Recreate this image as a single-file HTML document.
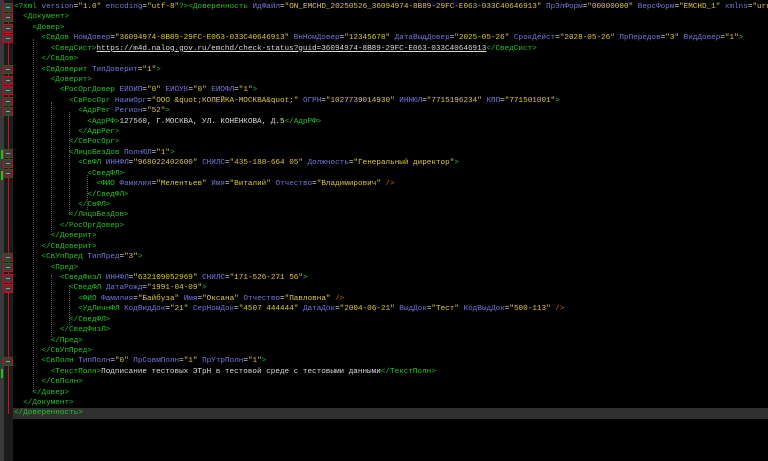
<!DOCTYPE html>
<html><head><meta charset="utf-8"><style>
html,body{margin:0;padding:0;background:#000;width:768px;height:461px;overflow:hidden}
.g1{position:absolute;left:0;top:0;width:4px;height:461px;background:#3a3a3a}
.g2{position:absolute;left:4px;top:0;width:9px;height:461px;background:#1c1c1c}
.rl{position:absolute;left:8px;top:7px;width:1px;height:407px;background:#c01818}
.fm{position:absolute;left:3px;width:10px;height:9px;border:1px solid #b01818;background:#3c3c3c;box-sizing:border-box}
.fm:after{content:"";position:absolute;left:2px;top:3px;width:4px;height:1px;background:#999}
.gb{position:absolute;left:1px;width:2px;background:#20c020}
.hl{position:absolute;left:13px;top:408px;width:755px;height:11px;background:#303030}
.guide{position:absolute;width:0;border-left:1px dotted #555}
pre{position:absolute;left:14px;top:2px;margin:0;font-family:"Liberation Mono",monospace;font-size:7.65px;line-height:10.42px;color:#d8d8d8;white-space:pre}
.t{color:#22c422}.a{color:#7474dc}.v{color:#dcc83c}.o{color:#d0601a}.x{color:#dadada}.u{text-decoration:underline}
</style></head><body>
<div class="g1"></div><div class="g2"></div>
<div class="hl"></div>
<div class="rl"></div>
<div class="fm" style="top:3px"></div>
<div class="fm" style="top:13px"></div>
<div class="fm" style="top:24px"></div>
<div class="fm" style="top:34px"></div>
<div class="fm" style="top:65px"></div>
<div class="fm" style="top:76px"></div>
<div class="fm" style="top:86px"></div>
<div class="fm" style="top:97px"></div>
<div class="fm" style="top:107px"></div>
<div class="fm" style="top:149px"></div>
<div class="fm" style="top:159px"></div>
<div class="fm" style="top:169px"></div>
<div class="fm" style="top:253px"></div>
<div class="fm" style="top:263px"></div>
<div class="fm" style="top:274px"></div>
<div class="fm" style="top:284px"></div>
<div class="fm" style="top:357px"></div>
<div class="gb" style="top:150px;height:9px"></div>
<div class="gb" style="top:171px;height:9px"></div>
<div class="gb" style="top:369px;height:9px"></div>
<div class="guide" style="left:33px;top:39px;height:352px"></div>
<div class="guide" style="left:51px;top:102px;height:130px"></div>
<div class="guide" style="left:51px;top:275px;height:62px"></div>
<div class="guide" style="left:69px;top:112px;height:103px"></div>
<div class="guide" style="left:87px;top:175px;height:35px"></div>
<div class="guide" style="left:69px;top:285px;height:40px"></div>
<pre><span class="t">&lt;?xml</span> <span class="a">version</span>=<span class="v">"1.0"</span> <span class="a">encoding</span>=<span class="v">"utf-8"</span><span class="t">?&gt;&lt;Доверенность</span> <span class="a">ИдФайл</span>=<span class="v">"ON_EMCHD_20250526_36094974-8B89-29FC-E063-033C40646913"</span> <span class="a">ПрЭлФорм</span>=<span class="v">"00000000"</span> <span class="a">ВерсФорм</span>=<span class="v">"EMCHD_1"</span> <span class="a">xmlns</span>=<span class="v">"urn</span>
  <span class="t">&lt;Документ&gt;</span>
    <span class="t">&lt;Довер&gt;</span>
      <span class="t">&lt;СвДов</span> <span class="a">НомДовер</span>=<span class="v">"36094974-8B89-29FC-E063-033C40646913"</span> <span class="a">ВнНомДовер</span>=<span class="v">"12345678"</span> <span class="a">ДатаВыдДовер</span>=<span class="v">"2025-05-26"</span> <span class="a">СрокДейст</span>=<span class="v">"2028-05-26"</span> <span class="a">ПрПередов</span>=<span class="v">"3"</span> <span class="a">ВидДовер</span>=<span class="v">"1"</span><span class="t">&gt;</span>
        <span class="t">&lt;СведСист&gt;</span><span class="x u">https://m4d.nalog.gov.ru/emchd/check-status?guid=36094974-8B89-29FC-E063-033C40646913</span><span class="t">&lt;/СведСист&gt;</span>
      <span class="t">&lt;/СвДов&gt;</span>
      <span class="t">&lt;СвДоверит</span> <span class="a">ТипДоверит</span>=<span class="v">"1"</span><span class="t">&gt;</span>
        <span class="t">&lt;Доверит&gt;</span>
          <span class="t">&lt;РосОргДовер</span> <span class="a">ЕИОИП</span>=<span class="v">"0"</span> <span class="a">ЕИОУК</span>=<span class="v">"0"</span> <span class="a">ЕИОФЛ</span>=<span class="v">"1"</span><span class="t">&gt;</span>
            <span class="t">&lt;СвРосОрг</span> <span class="a">НаимОрг</span>=<span class="v">"ООО &amp;quot;КОПЕЙКА-МОСКВА&amp;quot;"</span> <span class="a">ОГРН</span>=<span class="v">"1027739014930"</span> <span class="a">ИННЮЛ</span>=<span class="v">"7715196234"</span> <span class="a">КПП</span>=<span class="v">"771501001"</span><span class="t">&gt;</span>
              <span class="t">&lt;АдрРег</span> <span class="a">Регион</span>=<span class="v">"52"</span><span class="t">&gt;</span>
                <span class="t">&lt;АдрРФ&gt;</span><span class="x">127560, Г.МОСКВА, УЛ. КОНЁНКОВА, Д.5</span><span class="t">&lt;/АдрРФ&gt;</span>
              <span class="t">&lt;/АдрРег&gt;</span>
            <span class="t">&lt;/СвРосОрг&gt;</span>
            <span class="t">&lt;ЛицоБезДов</span> <span class="a">ПолнЮЛ</span>=<span class="v">"1"</span><span class="t">&gt;</span>
              <span class="t">&lt;СвФЛ</span> <span class="a">ИННФЛ</span>=<span class="v">"968022402600"</span> <span class="a">СНИЛС</span>=<span class="v">"435-188-664 05"</span> <span class="a">Должность</span>=<span class="v">"Генеральный директор"</span><span class="t">&gt;</span>
                <span class="t">&lt;СведФЛ&gt;</span>
                  <span class="t">&lt;ФИО</span> <span class="a">Фамилия</span>=<span class="v">"Мелентьев"</span> <span class="a">Имя</span>=<span class="v">"Виталий"</span> <span class="a">Отчество</span>=<span class="v">"Владимирович"</span> <span class="o">/&gt;</span>
                <span class="t">&lt;/СведФЛ&gt;</span>
              <span class="t">&lt;/СвФЛ&gt;</span>
            <span class="t">&lt;/ЛицоБезДов&gt;</span>
          <span class="t">&lt;/РосОргДовер&gt;</span>
        <span class="t">&lt;/Доверит&gt;</span>
      <span class="t">&lt;/СвДоверит&gt;</span>
      <span class="t">&lt;СвУпПред</span> <span class="a">ТипПред</span>=<span class="v">"3"</span><span class="t">&gt;</span>
        <span class="t">&lt;Пред&gt;</span>
          <span class="t">&lt;СведФизЛ</span> <span class="a">ИННФЛ</span>=<span class="v">"632109052969"</span> <span class="a">СНИЛС</span>=<span class="v">"171-526-271 56"</span><span class="t">&gt;</span>
            <span class="t">&lt;СведФЛ</span> <span class="a">ДатаРожд</span>=<span class="v">"1991-04-09"</span><span class="t">&gt;</span>
              <span class="t">&lt;ФИО</span> <span class="a">Фамилия</span>=<span class="v">"Байбуза"</span> <span class="a">Имя</span>=<span class="v">"Оксана"</span> <span class="a">Отчество</span>=<span class="v">"Павловна"</span> <span class="o">/&gt;</span>
              <span class="t">&lt;УдЛичнФЛ</span> <span class="a">КодВидДок</span>=<span class="v">"21"</span> <span class="a">СерНомДок</span>=<span class="v">"4507 444444"</span> <span class="a">ДатаДок</span>=<span class="v">"2004-06-21"</span> <span class="a">ВыдДок</span>=<span class="v">"Тест"</span> <span class="a">КодВыдДок</span>=<span class="v">"500-113"</span> <span class="o">/&gt;</span>
            <span class="t">&lt;/СведФЛ&gt;</span>
          <span class="t">&lt;/СведФизЛ&gt;</span>
        <span class="t">&lt;/Пред&gt;</span>
      <span class="t">&lt;/СвУпПред&gt;</span>
      <span class="t">&lt;СвПолн</span> <span class="a">ТипПолн</span>=<span class="v">"0"</span> <span class="a">ПрСовмПолн</span>=<span class="v">"1"</span> <span class="a">ПрУтрПолн</span>=<span class="v">"1"</span><span class="t">&gt;</span>
        <span class="t">&lt;ТекстПолн&gt;</span><span class="x">Подписание тестовых ЭТрН в тестовой среде с тестовыми данными</span><span class="t">&lt;/ТекстПолн&gt;</span>
      <span class="t">&lt;/СвПолн&gt;</span>
    <span class="t">&lt;/Довер&gt;</span>
  <span class="t">&lt;/Документ&gt;</span>
<span class="t">&lt;/Доверенность&gt;</span></pre>
</body></html>
